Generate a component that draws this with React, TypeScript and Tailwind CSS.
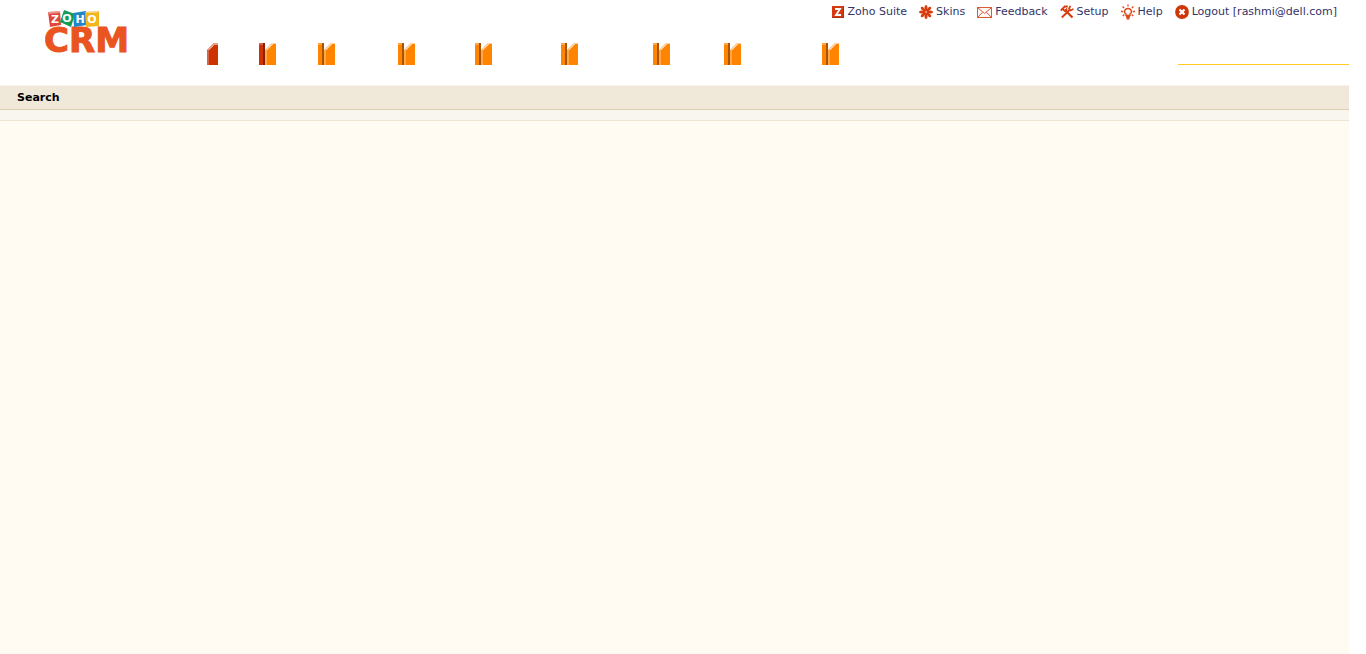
import React from "react";

type LinkItem = { label: string; icon: React.ReactNode };

const SuiteIcon = () => (
  <svg width="12" height="12" viewBox="0 0 12 12" aria-hidden="true">
    <rect width="12" height="12" fill="#a93216" />
    <rect width="11" height="11" fill="#d63a10" />
    <path d="M3 3h5L4 9h5" fill="none" stroke="#fff" strokeWidth="1.8" />
  </svg>
);

const SkinsIcon = () => (
  <svg width="14" height="14" viewBox="0 0 14 14" aria-hidden="true">
    {[0, 45, 90, 135, 180, 225, 270, 315].map((angle) => (
      <ellipse key={angle} cx="7" cy="2.600" rx="1.500" ry="2.600" fill="#d63c10" transform={`rotate(${angle} 7 7)`} />
    ))}
    <circle cx="7" cy="7" r="3" fill="#d63c10" />
    <circle cx="7" cy="7" r="1" fill="#f0a080" />
  </svg>
);

const FeedbackIcon = () => (
  <svg width="15" height="11" viewBox="0 0 15 11" fill="none" stroke="#dc5a34" aria-hidden="true">
    <rect x="0.5" y="0.5" width="14" height="10" fill="#fff8f4" />
    <path d="M1 1l6.500 5.500L14 1M1 10l4.500-4.700M14 10L9.500 5.300" />
  </svg>
);

const SetupIcon = () => (
  <svg width="14" height="14" viewBox="0 0 14 14" fill="none" stroke="#d63c10" aria-hidden="true">
    <path d="M5 5l7.500 7.500" strokeWidth="2.200" />
    <path d="M.8 5.500l4-4h3M3 4.500l2 1.500 2-2.500" strokeWidth="1.800" />
    <path d="M1.800 12.500L9.500 5" strokeWidth="1.800" />
    <path d="M10.500 .8L9 3.500l1.500 2L13.500 4" strokeWidth="1.700" />
  </svg>
);

const HelpIcon = () => (
  <svg width="14" height="16" viewBox="0 0 14 16" fill="none" stroke="#dc4a1c" aria-hidden="true">
    <path d="M5 11.500V10C2.500 8.500 3.500 4.500 7 4.500S11.500 8.500 9 10v1.500z" fill="#fff" strokeWidth="1.400" />
    <path d="M7 .5v2M1.500 2.500L3.200 4M12.500 2.500L10.800 4M0 7.500h2.300M11.700 7.500H14M1.800 12l1.500-1.500M12.200 12l-1.500-1.500" strokeWidth="1.300" />
    <path d="M5 12.500h4M5.500 14.500h3" strokeWidth="2" />
  </svg>
);

const LogoutIcon = () => (
  <svg width="14" height="14" viewBox="0 0 14 14" aria-hidden="true">
    <circle cx="7" cy="7" r="6.900" fill="#cf3505" />
    <path d="M4.500 4.500l5 5M9.500 4.500l-5 5" stroke="#fff" strokeWidth="2.200" />
  </svg>
);

const links: LinkItem[] = [
  { label: "Zoho Suite", icon: <SuiteIcon /> },
  { label: "Skins", icon: <SkinsIcon /> },
  { label: "Feedback", icon: <FeedbackIcon /> },
  { label: "Setup", icon: <SetupIcon /> },
  { label: "Help", icon: <HelpIcon /> },
  { label: "Logout [rashmi@dell.com]", icon: <LogoutIcon /> },
];

const Logo = () => (
  <svg width="106" height="52" viewBox="0 0 106 52" role="img" aria-label="Zoho CRM" fontFamily="'DejaVu Sans', sans-serif" fontWeight="bold" textAnchor="middle">
    <text x="-1" y="43" textAnchor="start" fontSize="34" fill="#e95420" stroke="#e95420" strokeWidth="1">CRM</text>
    <path d="M3 3l12-1 1 14-11 2z" fill="#e2453c" />
    <path d="M19 1l11 4-4 13-11-5z" fill="#159b54" />
    <path d="M28 4l13-2 1 14-13 2z" fill="#2187c9" />
    <path d="M40 3l14-1v15l-13 1z" fill="#f3b51b" />
    <path d="M3 3l12-1v2L4 5zM41 3l13-1-2 2H42z" fill="#fff" opacity=".4" />
    <g fill="#fff" fontSize="11">
      <text x="10" y="14">Z</text>
      <text x="22" y="13">O</text>
      <text x="35" y="14">H</text>
      <text x="47" y="14">O</text>
    </g>
  </svg>
);

const Divider = ({ dark }: { dark: boolean }) => (
  <svg className="shrink-0" width="17" height="22" viewBox="0 0 17 22" aria-hidden="true" shapeRendering="crispEdges">
    <rect width="4" height="22" fill={dark ? "#cc3300" : "#ff8400"} />
    <rect width="4" height="2" fill={dark ? "#d9654a" : "#ffa64d"} />
    <rect x="4" width="2" height="22" fill={dark ? "#8a2000" : "#a85400"} />
    <path d="M6 22V6l6-6h5v22z" fill="#ff8400" />
    <path d="M6 22V6h2v16z" fill="#ffa54a" />
    <path d="M6 6l6-6h5v1h-3L8 7H6z" fill="#ffd0a0" />
  </svg>
);

const tabs = [
  { id: "home", width: "w-[59px]", dark: true },
  { id: "leads", width: "w-20", dark: false },
  { id: "accounts", width: "w-[77px]", dark: false },
  { id: "contacts", width: "w-[86px]", dark: false },
  { id: "potentials", width: "w-[92px]", dark: false },
  { id: "reports", width: "w-[71px]", dark: false },
  { id: "dashboards", width: "w-[98px]", dark: false },
  { id: "more", width: "w-[17px]", dark: false },
];

export default function App() {
  return (
    <div className="flex min-h-screen flex-col bg-white pr-[17px] font-['DejaVu_Sans',Verdana,sans-serif] text-[11px] leading-4 text-[#333366]">
      <header className="flex h-[85px]">
        <div className="w-[207px] shrink-0 pt-[9px] pl-[45px]">
          <Logo />
        </div>
        <div className="flex min-w-0 flex-1 flex-col">
          <nav aria-label="Account" className="flex h-[43px] items-start justify-end gap-3 pt-1 pr-3">
            {links.map((link) => (
              <a key={link.label} href="#" className="flex h-4 items-center gap-[3px] whitespace-nowrap">
                <span className="flex h-4 shrink-0 items-center">{link.icon}</span>
                {link.label}
              </a>
            ))}
          </nav>
          <div className="flex justify-between">
            <div className="flex">
              <div className="w-[52px]">
                <svg width="11" height="22" viewBox="0 0 11 22" aria-hidden="true" shapeRendering="crispEdges">
                  <path d="M0 22V6l6-6h5v22z" fill="#cc3300" />
                  <path d="M0 22V6h2v16z" fill="#d96346" />
                  <path d="M0 6l6-6h5v2H7L2 7H0z" fill="#e5a08e" />
                </svg>
              </div>
              {tabs.map((tab) => (
                <div key={tab.id} className={tab.width}>
                  <Divider dark={tab.dark} />
                </div>
              ))}
            </div>
            <div className="w-[171px] border-b border-[#ffcc22]" />
          </div>
        </div>
      </header>
      <main className="flex flex-1 flex-col">
        <h1 className="border-t border-b border-t-[#f8f4ec] border-b-[#dccfb4] bg-[#f0e8d9] pt-1 pb-[3px] pl-[17px] font-bold text-black">Search</h1>
        <div className="h-[11px] border-b border-[#eee5d4] bg-[#f9f6f0]" />
        <section className="flex-1 bg-[#fffaf2]" />
      </main>
    </div>
  );
}
